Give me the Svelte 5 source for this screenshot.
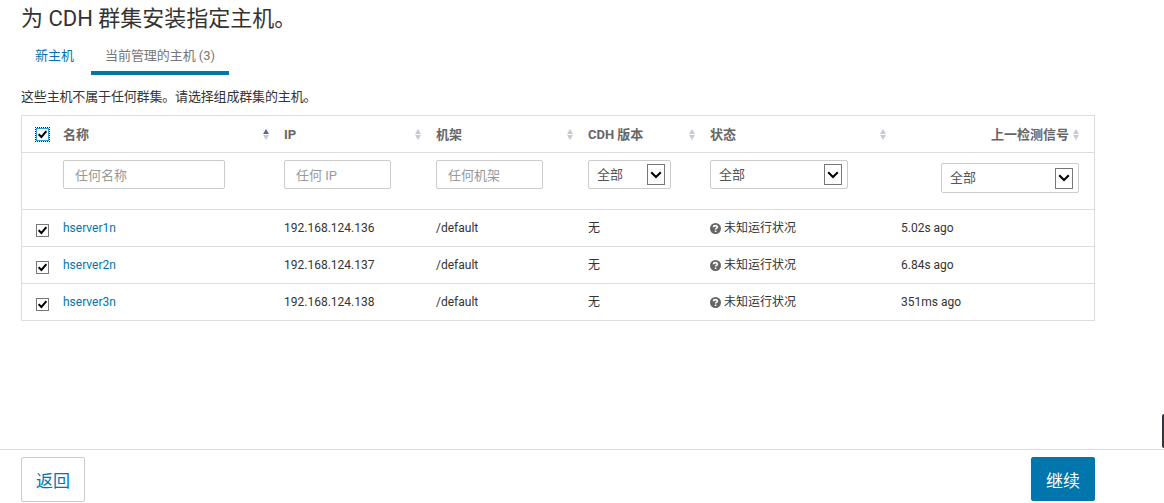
<script lang="ts">
  interface Host {
    name: string;
    ip: string;
    rack: string;
    version: string;
    status: string;
    heartbeat: string;
    checked: boolean;
  }

  let hosts: Host[] = [
    { name: 'hserver1n', ip: '192.168.124.136', rack: '/default', version: '无', status: '未知运行状况', heartbeat: '5.02s ago', checked: true },
    { name: 'hserver2n', ip: '192.168.124.137', rack: '/default', version: '无', status: '未知运行状况', heartbeat: '6.84s ago', checked: true },
    { name: 'hserver3n', ip: '192.168.124.138', rack: '/default', version: '无', status: '未知运行状况', heartbeat: '351ms ago', checked: true }
  ];

  const columns = [
    { label: '名称', sorted: true },
    { label: 'IP', sorted: false },
    { label: '机架', sorted: false },
    { label: 'CDH 版本', sorted: false },
    { label: '状态', sorted: false },
    { label: '上一检测信号', sorted: false }
  ];

  $: allChecked = hosts.every(h => h.checked);

  function toggleAll(): void {
    const next = !allChecked;
    hosts = hosts.map(h => ({ ...h, checked: next }));
  }

  function toggleHost(host: Host): void {
    host.checked = !host.checked;
    hosts = hosts;
  }
</script>

<main>
  <div class="content">
    <h1>为 CDH 群集安装指定主机。</h1>
    <nav class="tabs">
      <a class="tab" href="#new">新主机</a>
      <a class="tab active" href="#managed">当前管理的主机 (3)</a>
    </nav>
    <p class="hint">这些主机不属于任何群集。请选择组成群集的主机。</p>

    <div class="table">
      <div class="row head">
        <div class="pick">
          <button class="check focused" role="checkbox" aria-checked={allChecked} aria-label="全选" on:click={toggleAll}>
            {#if allChecked}
              <svg width="9" height="9" viewBox="0 0 9 9"><path d="M0.6 4.2 3.4 7 8.4 1.2" /></svg>
            {/if}
          </button>
        </div>
        {#each columns as column, i}
          <div class="th" class:last={i === columns.length - 1}>
            <span>{column.label}</span>
            <svg class="sort" class:asc={column.sorted} width="6" height="11" viewBox="0 0 6 11">
              <path class="up" d="M3 0 6 5H0z" />
              <path class="down" d="M0 6H6L3 11z" />
            </svg>
          </div>
        {/each}
      </div>

      <div class="row filters">
        <div></div>
        <div><input class="name" placeholder="任何名称" /></div>
        <div><input placeholder="任何 IP" /></div>
        <div><input placeholder="任何机架" /></div>
        <div>
          <button class="select small">
            全部
            <span class="arrow"><svg width="12" height="8" viewBox="0 0 12 8"><path d="M1.2 1.2 6 6 10.8 1.2" /></svg></span>
          </button>
        </div>
        <div>
          <button class="select">
            全部
            <span class="arrow"><svg width="12" height="8" viewBox="0 0 12 8"><path d="M1.2 1.2 6 6 10.8 1.2" /></svg></span>
          </button>
        </div>
        <div class="last">
          <button class="select tall">
            全部
            <span class="arrow"><svg width="12" height="8" viewBox="0 0 12 8"><path d="M1.2 1.2 6 6 10.8 1.2" /></svg></span>
          </button>
        </div>
      </div>

      {#each hosts as host}
        <div class="row host">
          <div class="pick">
            <button class="check" role="checkbox" aria-checked={host.checked} aria-label={host.name} on:click={() => toggleHost(host)}>
              {#if host.checked}
                <svg width="9" height="9" viewBox="0 0 9 9"><path d="M0.6 4.2 3.4 7 8.4 1.2" /></svg>
              {/if}
            </button>
          </div>
          <div><a href="#host">{host.name}</a></div>
          <div>{host.ip}</div>
          <div>{host.rack}</div>
          <div>{host.version}</div>
          <div class="status">
            <svg width="11" height="11" viewBox="0 0 11 11">
              <circle cx="5.5" cy="5.5" r="5.5" />
              <path d="M3.5 4.3C3.6 2.1 7.5 2.1 7.4 4.2 7.3 5.3 5.6 5.2 5.6 6.6" />
              <rect x="4.8" y="7.5" width="1.6" height="1.5" />
            </svg>
            {host.status}
          </div>
          <div>{host.heartbeat}</div>
        </div>
      {/each}
    </div>
  </div>

  <footer>
    <button class="btn">返回</button>
    <button class="btn primary">继续</button>
  </footer>
  <div class="handle"></div>
</main>

<style>
  :global(body) {
    margin: 0;
    background: #fff;
  }

  main {
    position: relative;
    display: flex;
    flex-direction: column;
    box-sizing: border-box;
    width: 100%;
    height: 503px;
    overflow: hidden;
    font-family: Roboto, "Noto Sans CJK SC", sans-serif;
    font-size: 12px;
    color: #333;
  }

  button,
  input {
    box-sizing: border-box;
    font-family: inherit;
  }

  a {
    color: #0076ad;
    text-decoration: none;
  }

  .content {
    flex: 1;
    padding: 0 69px 0 21px;
  }

  h1 {
    margin: 4px 0 0;
    font-size: 22px;
    font-weight: 400;
    line-height: 30px;
  }

  .tabs {
    display: flex;
    height: 41px;
  }

  .tab {
    box-sizing: border-box;
    padding: 12px 14px 0;
    font-size: 13px;
    line-height: 20px;
    white-space: nowrap;
  }

  .tab.active {
    width: 138px;
    margin-left: 3px;
    color: #777;
    letter-spacing: -0.05px;
    border-bottom: 4px solid #0076ad;
  }

  .hint {
    margin: 12px 0 8px;
    font-size: 13px;
    letter-spacing: -0.16px;
    line-height: 20px;
  }

  .table {
    border: 1px solid #ddd;
  }

  .row {
    display: grid;
    grid-template-columns: 41px 221px 152px 152px 122px 191px 1fr;
    box-sizing: border-box;
    border-bottom: 1px solid #ddd;
  }

  .row:last-child {
    border-bottom: none;
  }

  .head {
    height: 37px;
    color: #666;
    font-size: 13px;
    font-weight: 700;
  }

  .th {
    display: flex;
    align-items: center;
    justify-content: space-between;
    padding-right: 15px;
  }

  .th span {
    padding-top: 1px;
    line-height: 20px;
  }

  .th.last {
    justify-content: flex-end;
    gap: 4px;
  }

  .sort {
    fill: #c8c8d8;
  }

  .sort.asc .up {
    fill: #5b6b92;
  }

  .pick {
    padding: 14px 0 0 14px;
  }

  .head .pick {
    padding-top: 12px;
  }

  .check {
    display: flex;
    align-items: center;
    justify-content: center;
    width: 13px;
    height: 13px;
    padding: 0;
    background: #fff;
    border: 1px solid #777;
  }

  .check.focused {
    border-color: #2b9fd6;
    outline: 1px dotted #222;
  }

  .check path {
    fill: none;
    stroke: #000;
    stroke-width: 2;
  }

  .filters {
    height: 57px;
    padding-top: 7px;
  }

  input {
    display: block;
    width: 107px;
    height: 29px;
    padding: 1px 11px 0;
    color: #555;
    font-size: 13px;
    border: 1px solid #ccc;
    border-radius: 2px;
  }

  input.name {
    width: 162px;
  }

  input::placeholder {
    color: #999;
  }

  .select {
    display: flex;
    align-items: center;
    justify-content: space-between;
    width: 138px;
    height: 29px;
    padding: 0 5px 0 8px;
    color: #555;
    font-size: 13px;
    line-height: 18px;
    background: #fff;
    border: 1px solid #ccc;
    border-radius: 2px;
  }

  .select.small {
    width: 83px;
  }

  .select.tall {
    height: 30px;
  }

  .filters .last {
    display: flex;
    justify-content: flex-end;
    padding: 3px 15px 0 0;
  }

  .arrow {
    display: flex;
    align-items: center;
    justify-content: center;
    box-sizing: border-box;
    width: 18px;
    height: 21px;
    border: 1px solid #777;
  }

  .arrow path {
    fill: none;
    stroke: #000;
    stroke-width: 2;
  }

  .host {
    height: 37px;
    line-height: 37px;
  }

  .host:last-child {
    height: 36px;
    line-height: 36px;
  }

  .status {
    display: flex;
    align-items: center;
    gap: 3px;
  }

  .status circle {
    fill: #666;
  }

  .status rect {
    fill: #fff;
  }

  .status path {
    fill: none;
    stroke: #fff;
    stroke-width: 1.6;
  }

  footer {
    display: flex;
    justify-content: space-between;
    box-sizing: border-box;
    height: 54px;
    padding: 7px 69px 0 21px;
    border-top: 1px solid #ddd;
  }

  .btn {
    width: 64px;
    height: 45px;
    padding: 0;
    color: #0076ad;
    font-size: 17px;
    background: #fff;
    border: 1px solid #ccc;
    border-radius: 2px;
  }

  .btn.primary {
    height: 44px;
    color: #fff;
    background: #0076ad;
    border-color: #0076ad;
  }

  .handle {
    position: absolute;
    top: 414px;
    right: 0;
    width: 2px;
    height: 34px;
    background: #34343c;
    border-radius: 2px 0 0 2px;
  }
</style>
